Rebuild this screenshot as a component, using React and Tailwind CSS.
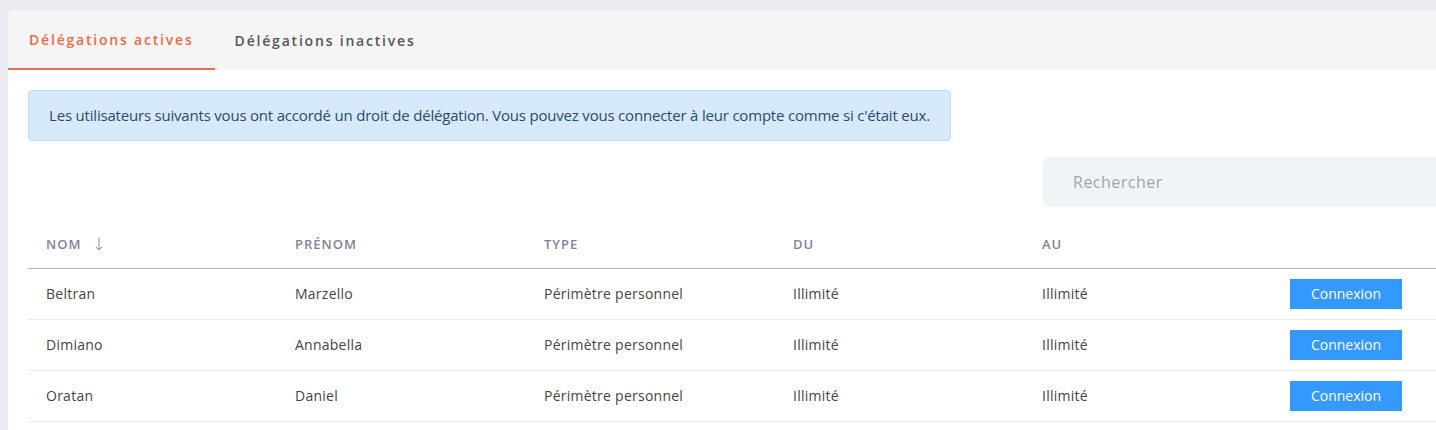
import React from "react";

const rows = [
    { nom: "Beltran", prenom: "Marzello" },
    { nom: "Dimiano", prenom: "Annabella" },
    { nom: "Oratan", prenom: "Daniel" },
];

const font = { fontFamily: "'Open Sans', 'Noto Sans', sans-serif" };

function SortArrow() {
    return (
        <svg className="inline-block ml-[14px] -mt-[3px]" width="8" height="14" viewBox="0 0 8 14" fill="none" stroke="#8a8a8a" strokeWidth="1">
            <path d="M4 0.5V13" />
            <path d="M0.8 9.8L4 13L7.2 9.8" />
        </svg>
    );
}

export default function App() {
    return (
        <div className="w-[1436px] h-[430px] overflow-hidden bg-[#ebebf3] pt-[10px] pl-[8px]" style={font}>
            <div className="w-[1534px] h-[440px] bg-white rounded-tl-md">
                {/* onglets */}
                <div className="flex h-[60px] bg-[#f5f5f5] rounded-tl-md">
                    <div className="flex items-center px-[21px] border-b-2 border-[#ee6b43] text-[#ee6b43] text-[14px] font-semibold tracking-[1.8px]">
                        Délégations actives
                    </div>
                    <div className="flex items-center px-[20px] text-[#555] text-[14px] font-semibold tracking-[1.8px]">
                        Délégations inactives
                    </div>
                </div>

                <div className="px-[20px] pt-[20px]">
                    <div className="w-[923px] h-[51px] flex items-center justify-center bg-[#d6eafc] border border-[#bcdcf7] rounded text-[#2c4a6a] text-[15px] tracking-[-0.2px]">
                        Les utilisateurs suivants vous ont accordé un droit de délégation. Vous pouvez vous connecter à leur compte comme si c'était eux.
                    </div>

                    <div className="flex justify-end mt-[16px]">
                        <input
                            className="w-[479px] h-[50px] bg-[#f1f4f7] rounded-md pl-[30px] text-[16px] tracking-[0.5px] placeholder:text-[#a0a4aa] outline-none"
                            placeholder="Rechercher"
                        />
                    </div>

                    <table className="mt-[14px] w-[1494px] table-fixed border-collapse">
                        <thead>
                            <tr className="h-[47px] border-b border-[#b4b4b8] text-left text-[13px] text-[#7f8398] uppercase tracking-[1px]">
                                <th className="pl-[18px] font-semibold">
                                    NOM<SortArrow />
                                </th>
                                <th className="pl-[18px] font-semibold">Prénom</th>
                                <th className="pl-[18px] font-semibold">Type</th>
                                <th className="pl-[18px] font-semibold">Du</th>
                                <th className="pl-[18px] font-semibold">Au</th>
                                <th></th>
                            </tr>
                        </thead>
                        <tbody>
                            {rows.map((r) => (
                                <tr key={r.nom} className="h-[51px] border-b border-[#ececec] text-[14px] text-[#444] tracking-[0.25px]">
                                    <td className="pl-[18px]">{r.nom}</td>
                                    <td className="pl-[18px]">{r.prenom}</td>
                                    <td className="pl-[18px]">Périmètre personnel</td>
                                    <td className="pl-[18px]">Illimité</td>
                                    <td className="pl-[18px]">Illimité</td>
                                    <td className="pl-[17px]">
                                        <button className="w-[112px] h-[30px] bg-[#3399ff] text-white text-[14px] font-medium tracking-normal">
                                            Connexion
                                        </button>
                                    </td>
                                </tr>
                            ))}
                        </tbody>
                    </table>
                </div>
            </div>
        </div>
    );
}
